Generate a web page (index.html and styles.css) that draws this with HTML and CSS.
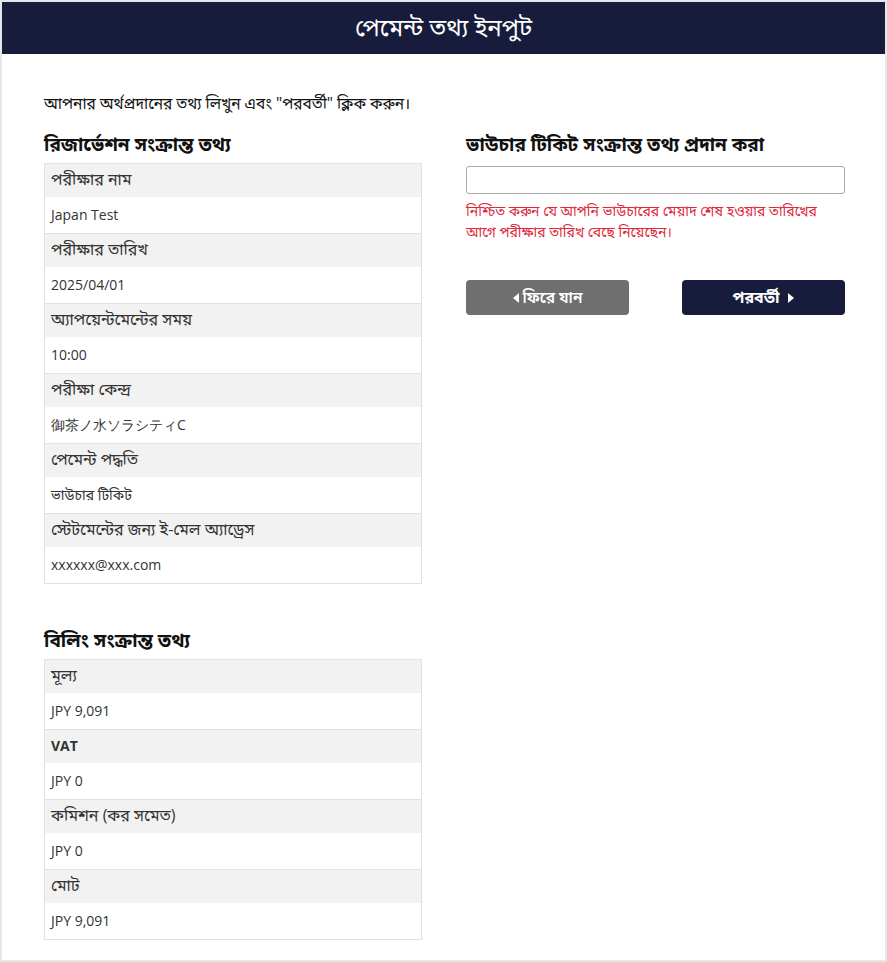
FILE: index.html
```html
<!DOCTYPE html>
<html lang="bn">
<head>
  <meta charset="utf-8">
  <title>পেমেন্ট তথ্য ইনপুট</title>
  <link rel="stylesheet" href="styles.css">
</head>
<body>
  <div class="page">
    <header class="topbar">
      <h1>পেমেন্ট তথ্য ইনপুট</h1>
    </header>

    <main class="content">
      <p class="lead">আপনার অর্থপ্রদানের তথ্য লিখুন এবং "পরবর্তী" ক্লিক করুন।</p>

      <div class="columns">
        <section class="col">
          <h2>রিজার্ভেশন সংক্রান্ত তথ্য</h2>
          <dl class="info">
            <dt>পরীক্ষার নাম</dt>
            <dd>Japan Test</dd>
            <dt>পরীক্ষার তারিখ</dt>
            <dd>2025/04/01</dd>
            <dt>অ্যাপয়েন্টমেন্টের সময়</dt>
            <dd>10:00</dd>
            <dt>পরীক্ষা কেন্দ্র</dt>
            <dd>御茶ノ水ソラシティC</dd>
            <dt>পেমেন্ট পদ্ধতি</dt>
            <dd>ভাউচার টিকিট</dd>
            <dt>স্টেটমেন্টের জন্য ই-মেল অ্যাড্রেস</dt>
            <dd>xxxxxx@xxx.com</dd>
          </dl>

          <h2 class="spaced">বিলিং সংক্রান্ত তথ্য</h2>
          <dl class="info">
            <dt>মূল্য</dt>
            <dd>JPY 9,091</dd>
            <dt class="latin">VAT</dt>
            <dd>JPY 0</dd>
            <dt>কমিশন (কর সমেত)</dt>
            <dd>JPY 0</dd>
            <dt>মোট</dt>
            <dd>JPY 9,091</dd>
          </dl>
        </section>

        <section class="col">
          <h2>ভাউচার টিকিট সংক্রান্ত তথ্য প্রদান করা</h2>
          <input class="voucher" type="text">
          <p class="note">নিশ্চিত করুন যে আপনি ভাউচারের মেয়াদ শেষ হওয়ার তারিখের আগে পরীক্ষার তারিখ বেছে নিয়েছেন।</p>

          <div class="actions">
            <button class="btn btn-back"><span class="tri tri-left"></span>ফিরে যান</button>
            <button class="btn btn-next">পরবর্তী<span class="tri tri-right"></span></button>
          </div>
        </section>
      </div>
    </main>
  </div>
</body>
</html>
```

FILE: styles.css
```css
html {
  background: #e6e6e6;
}

body {
  margin: 0;
  padding: 2px;
  font-family: "Open Sans", "Noto Sans", "Noto Sans Bengali", sans-serif;
  color: #222;
}

.page {
  background: #fff;
  min-height: 958px;
}

.topbar {
  background: #181c3c;
  height: 52px;
  display: flex;
  align-items: center;
  justify-content: center;
}

.topbar h1 {
  margin: 0;
  color: #fff;
  font-size: 24px;
  font-weight: normal;
}

.content {
  padding: 38px 40px 20px 42px;
}

.lead {
  margin: 0 0 19px;
  font-size: 15.5px;
  line-height: 22px;
  color: #111;
}

.columns {
  display: grid;
  grid-template-columns: 378px 379px;
  column-gap: 44px;
}

h2 {
  margin: 0 0 8px;
  font-size: 19px;
  font-weight: bold;
  color: #111;
  line-height: 22px;
}

h2.spaced {
  margin-top: 45px;
}

.info {
  margin: 0;
  border: 1px solid #dfe1e3;
}

.info dt,
.info dd {
  margin: 0;
  padding: 0 6px;
  color: #333;
}

.info dt {
  background: #f2f2f2;
  height: 33px;
  line-height: 31px;
  font-size: 16px;
}

.info dd {
  background: #fff;
  height: 36px;
  line-height: 36px;
  font-size: 14px;
  border-bottom: 1px solid #dfe1e3;
}

.info dd:last-child {
  border-bottom: none;
}

.info dt.latin {
  font-size: 14px;
  font-weight: bold;
}

.voucher {
  display: block;
  box-sizing: border-box;
  width: 100%;
  height: 28px;
  margin-top: 11px;
  border: 1px solid #a9a9a9;
  border-radius: 3px;
}

.note {
  margin: 6px 0 0;
  font-size: 14px;
  line-height: 21px;
  color: #e0283b;
}

.actions {
  display: flex;
  justify-content: space-between;
  margin-top: 38px;
}

.btn {
  width: 163px;
  height: 35px;
  border: none;
  border-radius: 4px;
  color: #fff;
  font-family: inherit;
  font-size: 15.5px;
  display: flex;
  align-items: center;
  justify-content: center;
  gap: 4px;
}

.btn-back {
  background: #6f6f6f;
  font-weight: 600;
}

.btn-next {
  background: #181c3c;
  font-size: 16px;
  font-weight: bold;
}

.tri {
  width: 0;
  height: 0;
  border-top: 5px solid transparent;
  border-bottom: 5px solid transparent;
}

.tri-left {
  border-right: 6px solid #fff;
}

.tri-right {
  border-left: 6px solid #fff;
  margin-left: 5px;
}
```
